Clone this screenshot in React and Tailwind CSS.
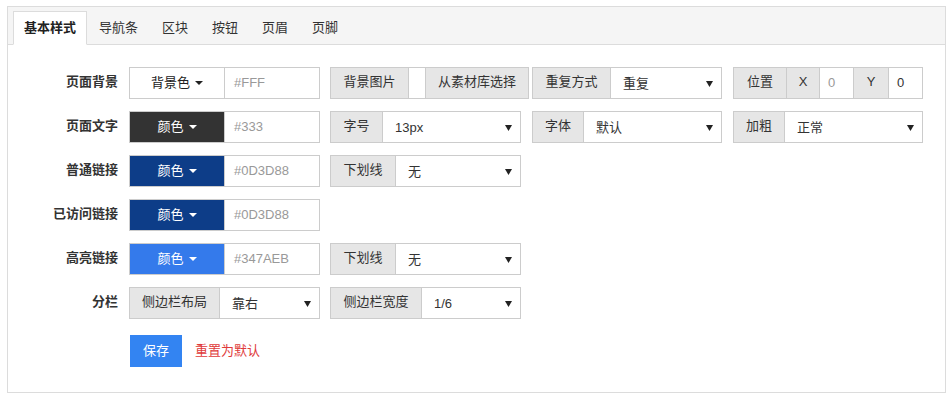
import React from "react";

const FONT = { fontFamily: '"Liberation Sans", "Noto Sans CJK SC", sans-serif' };

function Caret({ color = "#333" }) {
  return (
    <span
      className="inline-block ml-[5px] w-0 h-0 border-x-[4px] border-x-transparent border-t-[4px] align-middle"
      style={{ borderTopColor: color }}
    />
  );
}

function Arrow() {
  return (
    <svg width="7" height="7" viewBox="0 0 7 7" className="shrink-0">
      <path d="M0 1 L7 1 L3.5 7 Z" fill="#222" />
    </svg>
  );
}

function Addon({ w, children, className = "" }) {
  return (
    <div
      className={`flex items-center justify-center shrink-0 bg-[#e6e6e6] border-r border-[#ccc] text-[#333] h-full pb-[2px] ${className}`}
      style={{ width: w }}
    >
      {children}
    </div>
  );
}

function Select({ value }) {
  return (
    <div className="flex-1 flex items-center justify-between pl-3 pr-[8px] bg-white text-[#333] h-full">
      <span className="pt-[1px]">{value}</span>
      <Arrow />
    </div>
  );
}

function Group({ w, children }) {
  return (
    <div className="flex h-[32px] border border-[#ccc] shrink-0" style={{ width: w }}>
      {children}
    </div>
  );
}

function ColorGroup({ label, bg, fg, caret, hex, bordered }) {
  return (
    <Group w={191}>
      <div
        className={`w-[95px] shrink-0 flex items-center justify-center h-full border-r border-[#ccc] pb-[1px] ${bg} ${fg}`}
      >
        <span>{label}</span>
        <Caret color={caret} />
      </div>
      <div className="flex-1 flex items-center pl-[9px] bg-white text-[#999] h-full">{hex}</div>
    </Group>
  );
}

function Row({ label, children }) {
  return (
    <div className="flex items-center h-[32px]">
      <div className="w-[110px] shrink-0 text-right font-bold text-[#333] pb-[2px]">{label}</div>
      <div className="ml-[11px] flex items-center">{children}</div>
    </div>
  );
}

function Cell({ w, ml = 0, children }) {
  return (
    <div className="shrink-0" style={{ width: w, marginLeft: ml }}>
      {children}
    </div>
  );
}

export default function App() {
  const tabs = ["导航条", "区块", "按钮", "页眉", "页脚"];
  return (
    <div className="w-[952px] h-[398px] bg-white pt-[6px] pl-[7px] text-[13px]" style={FONT}>
      <div className="w-[939px] h-[387px] border border-[#dcdcdc] flex flex-col">
        <div className="h-[38px] bg-[#f5f5f5] border-b border-[#dcdcdc] flex items-end pl-[5px] shrink-0">
          <div className="h-[34px] -mb-px px-[10px] bg-white border border-[#dcdcdc] border-b-white flex items-center font-bold text-[#222]">
            基本样式
          </div>
          {tabs.map((t) => (
            <div key={t} className="h-[34px] -mb-px px-[12px] flex items-center text-[#333]">
              {t}
            </div>
          ))}
        </div>

        <div className="pt-[22px] flex flex-col gap-[12px]">
          <Row label="页面背景">
            <Cell w={191}>
              <ColorGroup label="背景色" bg="bg-white" fg="text-[#222]" caret="#222" hex="#FFF" />
            </Cell>
            <Cell w={191} ml={10}>
              <Group w={199}>
                <Addon w={78}>背景图片</Addon>
                <div className="w-[17px] shrink-0 bg-white border-r border-[#ccc] h-full" />
                <Addon w={102} className="border-r-0 text-[#3a6ec4]">从素材库选择</Addon>
              </Group>
            </Cell>
            <Cell w={190} ml={11}>
              <Group w={190}>
                <Addon w={78}>重复方式</Addon>
                <Select value="重复" />
              </Group>
            </Cell>
            <Cell w={190} ml={11}>
              <Group w={190}>
                <Addon w={53}>位置</Addon>
                <Addon w={33}>X</Addon>
                <div className="w-[34px] shrink-0 bg-white border-r border-[#ccc] flex items-center pl-[8px] text-[#999]">0</div>
                <Addon w={35}>Y</Addon>
                <div className="flex-1 bg-white flex items-center pl-[8px] text-[#333]">0</div>
              </Group>
            </Cell>
          </Row>

          <Row label="页面文字">
            <Cell w={191}>
              <ColorGroup label="颜色" bg="bg-[#333333]" fg="text-white" caret="#fff" hex="#333" />
            </Cell>
            <Cell w={191} ml={10}>
              <Group w={191}>
                <Addon w={52}>字号</Addon>
                <Select value="13px" />
              </Group>
            </Cell>
            <Cell w={190} ml={11}>
              <Group w={190}>
                <Addon w={51}>字体</Addon>
                <Select value="默认" />
              </Group>
            </Cell>
            <Cell w={190} ml={11}>
              <Group w={190}>
                <Addon w={51}>加粗</Addon>
                <Select value="正常" />
              </Group>
            </Cell>
          </Row>

          <Row label="普通链接">
            <Cell w={191}>
              <ColorGroup label="颜色" bg="bg-[#0D3D88]" fg="text-white" caret="#fff" hex="#0D3D88" />
            </Cell>
            <Cell w={191} ml={10}>
              <Group w={191}>
                <Addon w={65}>下划线</Addon>
                <Select value="无" />
              </Group>
            </Cell>
          </Row>

          <Row label="已访问链接">
            <Cell w={191}>
              <ColorGroup label="颜色" bg="bg-[#0D3D88]" fg="text-white" caret="#fff" hex="#0D3D88" />
            </Cell>
          </Row>

          <Row label="高亮链接">
            <Cell w={191}>
              <ColorGroup label="颜色" bg="bg-[#347AEB]" fg="text-white" caret="#fff" hex="#347AEB" />
            </Cell>
            <Cell w={191} ml={10}>
              <Group w={191}>
                <Addon w={65}>下划线</Addon>
                <Select value="无" />
              </Group>
            </Cell>
          </Row>

          <Row label="分栏">
            <Cell w={191}>
              <Group w={191}>
                <Addon w={90}>侧边栏布局</Addon>
                <Select value="靠右" />
              </Group>
            </Cell>
            <Cell w={191} ml={10}>
              <Group w={191}>
                <Addon w={91}>侧边栏宽度</Addon>
                <Select value="1/6" />
              </Group>
            </Cell>
          </Row>

          <div className="flex items-center h-[32px] mt-[4px]">
            <div className="w-[110px] shrink-0" />
            <div className="ml-[12px] flex items-center">
              <button className="w-[52px] h-[32px] bg-[#3384f2] text-white flex items-center justify-center pb-[1px]">
                保存
              </button>
              <span className="ml-[13px] text-[#e03a3a] pb-[1px]">重置为默认</span>
            </div>
          </div>
        </div>
      </div>
    </div>
  );
}
